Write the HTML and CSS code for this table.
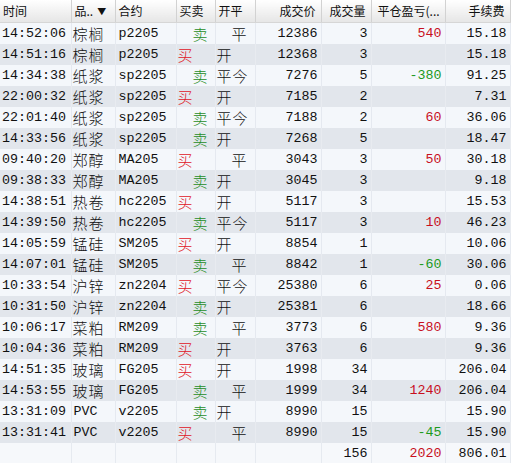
FILE: index.html
```html
<!DOCTYPE html>
<html lang="zh">
<head>
<meta charset="utf-8">
<title>成交记录</title>
<link rel="stylesheet" href="styles.css">
</head>
<body>
<div class="wrap">
<table class="grid">
<colgroup>
<col class="c1"><col class="c2"><col class="c3"><col class="c4"><col class="c5"><col class="c6"><col class="c7"><col class="c8"><col class="c9">
</colgroup>
<thead>
<tr>
<th class="l">时间</th>
<th class="l">品..<span class="tri">▼</span></th>
<th class="l">合约</th>
<th class="l">买卖</th>
<th class="l">开平</th>
<th class="r">成交价</th>
<th class="r">成交量</th>
<th class="l pl">平仓盈亏(...</th>
<th class="r">手续费</th>
</tr>
</thead>
<tbody>
<tr><td>14:52:06</td><td class="cn">棕榈</td><td class="ct">p2205</td><td class="cn sell ind">卖</td><td class="cn ind">平</td><td class="n">12386</td><td class="n">3</td><td class="n red">540</td><td class="n">15.18</td></tr>
<tr><td>14:51:16</td><td class="cn">棕榈</td><td class="ct">p2205</td><td class="cn buy">买</td><td class="cn">开</td><td class="n">12368</td><td class="n">3</td><td class="n"></td><td class="n">15.18</td></tr>
<tr><td>14:34:38</td><td class="cn">纸浆</td><td class="ct">sp2205</td><td class="cn sell ind">卖</td><td class="cn">平今</td><td class="n">7276</td><td class="n">5</td><td class="n green">-380</td><td class="n">91.25</td></tr>
<tr><td>22:00:32</td><td class="cn">纸浆</td><td class="ct">sp2205</td><td class="cn buy">买</td><td class="cn">开</td><td class="n">7185</td><td class="n">2</td><td class="n"></td><td class="n">7.31</td></tr>
<tr><td>22:01:40</td><td class="cn">纸浆</td><td class="ct">sp2205</td><td class="cn sell ind">卖</td><td class="cn">平今</td><td class="n">7188</td><td class="n">2</td><td class="n red">60</td><td class="n">36.06</td></tr>
<tr><td>14:33:56</td><td class="cn">纸浆</td><td class="ct">sp2205</td><td class="cn sell ind">卖</td><td class="cn">开</td><td class="n">7268</td><td class="n">5</td><td class="n"></td><td class="n">18.47</td></tr>
<tr><td>09:40:20</td><td class="cn">郑醇</td><td class="ct">MA205</td><td class="cn buy">买</td><td class="cn ind">平</td><td class="n">3043</td><td class="n">3</td><td class="n red">50</td><td class="n">30.18</td></tr>
<tr><td>09:38:33</td><td class="cn">郑醇</td><td class="ct">MA205</td><td class="cn sell ind">卖</td><td class="cn">开</td><td class="n">3045</td><td class="n">3</td><td class="n"></td><td class="n">9.18</td></tr>
<tr><td>14:38:51</td><td class="cn">热卷</td><td class="ct">hc2205</td><td class="cn buy">买</td><td class="cn">开</td><td class="n">5117</td><td class="n">3</td><td class="n"></td><td class="n">15.53</td></tr>
<tr><td>14:39:50</td><td class="cn">热卷</td><td class="ct">hc2205</td><td class="cn sell ind">卖</td><td class="cn">平今</td><td class="n">5117</td><td class="n">3</td><td class="n red">10</td><td class="n">46.23</td></tr>
<tr><td>14:05:59</td><td class="cn">锰硅</td><td class="ct">SM205</td><td class="cn buy">买</td><td class="cn">开</td><td class="n">8854</td><td class="n">1</td><td class="n"></td><td class="n">10.06</td></tr>
<tr><td>14:07:01</td><td class="cn">锰硅</td><td class="ct">SM205</td><td class="cn sell ind">卖</td><td class="cn ind">平</td><td class="n">8842</td><td class="n">1</td><td class="n green">-60</td><td class="n">30.06</td></tr>
<tr><td>10:33:54</td><td class="cn">沪锌</td><td class="ct">zn2204</td><td class="cn buy">买</td><td class="cn">平今</td><td class="n">25380</td><td class="n">6</td><td class="n red">25</td><td class="n">0.06</td></tr>
<tr><td>10:31:50</td><td class="cn">沪锌</td><td class="ct">zn2204</td><td class="cn sell ind">卖</td><td class="cn">开</td><td class="n">25381</td><td class="n">6</td><td class="n"></td><td class="n">18.66</td></tr>
<tr><td>10:06:17</td><td class="cn">菜粕</td><td class="ct">RM209</td><td class="cn sell ind">卖</td><td class="cn ind">平</td><td class="n">3773</td><td class="n">6</td><td class="n red">580</td><td class="n">9.36</td></tr>
<tr><td>10:04:36</td><td class="cn">菜粕</td><td class="ct">RM209</td><td class="cn buy">买</td><td class="cn">开</td><td class="n">3763</td><td class="n">6</td><td class="n"></td><td class="n">9.36</td></tr>
<tr><td>14:51:35</td><td class="cn">玻璃</td><td class="ct">FG205</td><td class="cn buy">买</td><td class="cn">开</td><td class="n">1998</td><td class="n">34</td><td class="n"></td><td class="n">206.04</td></tr>
<tr><td>14:53:55</td><td class="cn">玻璃</td><td class="ct">FG205</td><td class="cn sell ind">卖</td><td class="cn ind">平</td><td class="n">1999</td><td class="n">34</td><td class="n red">1240</td><td class="n">206.04</td></tr>
<tr><td>13:31:09</td><td class="pv">PVC</td><td class="ct">v2205</td><td class="cn sell ind">卖</td><td class="cn">开</td><td class="n">8990</td><td class="n">15</td><td class="n"></td><td class="n">15.90</td></tr>
<tr><td>13:31:41</td><td class="pv">PVC</td><td class="ct">v2205</td><td class="cn buy">买</td><td class="cn ind">平</td><td class="n">8990</td><td class="n">15</td><td class="n green">-45</td><td class="n">15.90</td></tr>
<tr class="total"><td></td><td></td><td></td><td></td><td></td><td></td><td class="n">156</td><td class="n red">2020</td><td class="n">806.01</td></tr>
</tbody>
</table>
<div class="edge"></div>
</div>
</body>
</html>
```

FILE: styles.css
```css
html, body {
  margin: 0;
  padding: 0;
  background: #ffffff;
}

.wrap {
  display: flex;
  width: 515px;
  height: 463px;
  overflow: hidden;
}

.edge {
  flex: 1;
  background: #ffffff;
}

.grid {
  width: 510px;
  table-layout: fixed;
  border-collapse: collapse;
  border-spacing: 0;
  flex: none;
}

.c1 { width: 71px; }
.c2 { width: 44px; }
.c3 { width: 61px; }
.c4 { width: 39px; }
.c5 { width: 40px; }
.c6 { width: 66px; }
.c7 { width: 50px; }
.c8 { width: 74px; }
.c9 { width: 65px; }

th {
  height: 22px;
  padding: 0 4px 0 3px;
  box-sizing: border-box;
  font-family: "Noto Sans CJK SC", "Noto Sans", sans-serif;
  font-weight: normal;
  font-size: 12px;
  color: #111;
  background: linear-gradient(#ffffff, #f1f1f1 55%, #e6e6e6);
  border-right: 1px solid #d2d2d2;
  border-bottom: 1px solid #d6d6d6;
  white-space: nowrap;
  overflow: hidden;
}

th.l { text-align: left; }
th.r { text-align: right; padding-right: 5px; }
th.pl { padding-left: 6px; }

.tri {
  font-size: 9px;
  margin-left: 4px;
  vertical-align: 1px;
}

td {
  height: 21px;
  padding: 0 2px 0 2px;
  box-sizing: border-box;
  font-family: "Liberation Mono", "Noto Sans CJK SC", monospace;
  font-size: 13.33px;
  color: #111;
  white-space: nowrap;
  overflow: hidden;
  border-right: 1px solid #e5e9f0;
  line-height: 21px;
}

tbody tr:nth-child(odd) td { background: #f4f7fb; }
tbody tr:nth-child(even) td { background: #e2e6ec; border-right-color: #e8ebf0; }

tbody tr.total td { background: #f6f8fb; border-right-color: #e6eaf0; }

td.cn {
  font-family: "Noto Sans CJK SC", sans-serif;
  font-size: 15px;
  font-weight: 300;
  letter-spacing: 1px;
  padding-left: 1px;
}

td.ct { padding-left: 3px; }
td.pv { padding-left: 2px; }

td.ind { padding-left: 16px; }

td.n { text-align: right; padding-right: 3px; }

td.buy { color: #e0141e; }
td.sell { color: #1e8c1e; }
td.red { color: #c8101e; }
td.green { color: #1c9a1c; }
```
